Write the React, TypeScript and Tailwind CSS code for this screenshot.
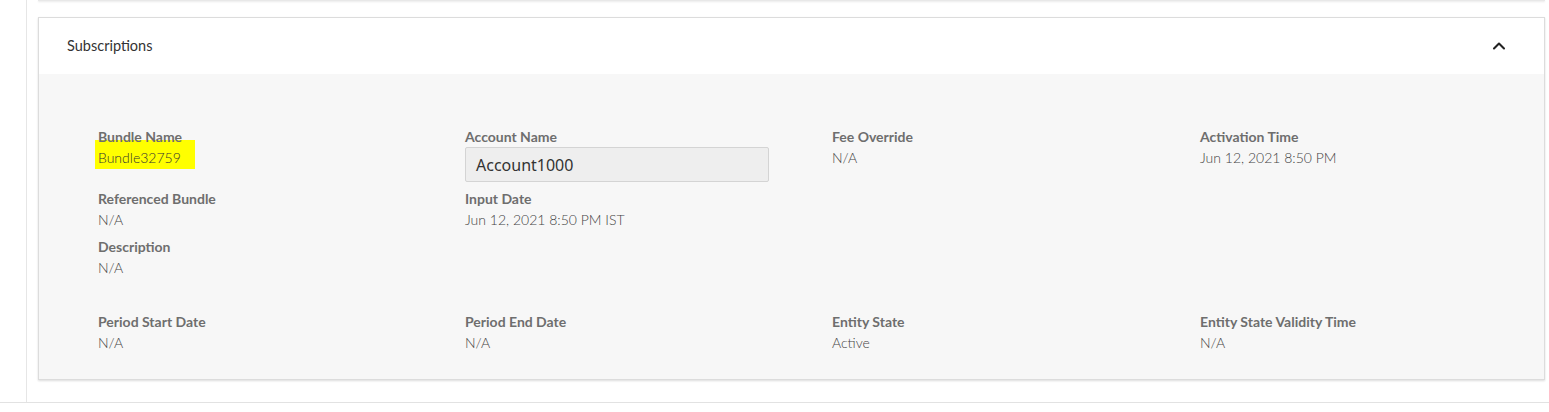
import { ChevronUp } from 'lucide-react';

type Field = { label: string; value?: string; input?: boolean; highlight?: boolean };

// rows of the top group, each cell sits in one of four columns
const topFields: (Field | null)[] = [
  { label: 'Bundle Name', value: 'Bundle32759', highlight: true },
  { label: 'Account Name', value: 'Account1000', input: true },
  { label: 'Fee Override', value: 'N/A' },
  { label: 'Activation Time', value: 'Jun 12, 2021 8:50 PM' },
  { label: 'Referenced Bundle', value: 'N/A' },
  { label: 'Input Date', value: 'Jun 12, 2021 8:50 PM IST' },
  null,
  null,
  { label: 'Description', value: 'N/A' },
];

const bottomFields: Field[] = [
  { label: 'Period Start Date', value: 'N/A' },
  { label: 'Period End Date', value: 'N/A' },
  { label: 'Entity State', value: 'Active' },
  { label: 'Entity State Validity Time', value: 'N/A' },
];

function FieldItem({ field }: { field: Field }) {
  return (
    <div className="flex flex-col">
      <span className="relative z-10 text-[14px] font-bold leading-[21px] text-[#6e6e6e]">{field.label}</span>
      {field.input ? (
        <div className="flex h-[35px] w-[304px] items-center rounded-[2px] border border-[#d4d4d4] bg-[#eeeeee] px-[10px] font-['Noto_Sans',sans-serif] text-[16px] text-[#333]">
          {field.value}
        </div>
      ) : field.highlight ? (
        <span className="-ml-[3px] -mt-[7px] flex h-[29px] w-[100px] items-end bg-[#ffff00] pb-[1px] pl-[3px] text-[14px] font-light leading-[21px] text-[#333]">
          {field.value}
        </span>
      ) : (
        <span className="text-[14px] font-light leading-[21px] text-[#444]">{field.value}</span>
      )}
    </div>
  );
}

export default function App() {
  return (
    <div className="h-[412px] w-[1549px] bg-white font-['Lato',sans-serif]">
      <div className="h-[403px] border-b border-[#e2e2e2]">
        <div className="ml-[26px] h-full border-l border-[#e6e6e6] pl-[11px]">
          <div className="h-[1px] w-[1507px] bg-[#e8e8e8] shadow-[0_1px_2px_rgba(0,0,0,0.12)]" />
          <div className="mt-[16px] w-[1507px] border border-[#dcdcdc] shadow-[0_1px_2px_rgba(0,0,0,0.14)]">
            <div className="flex h-[56px] items-center justify-between bg-white pl-[28px] pr-[35px]">
              <span className="text-[14.5px] text-[#333]">Subscriptions</span>
              <ChevronUp className="h-[20px] w-[20px] text-[#222]" strokeWidth={2.5} />
            </div>
            <div className="bg-[#f7f7f7] pb-[26px] pl-[59px] pt-[52px]">
              <div className="grid grid-cols-[367px_367px_368px_367px] gap-y-[6px]">
                {topFields.map((f, i) => (f ? <FieldItem key={f.label} field={f} /> : <div key={i} />))}
              </div>
              <div className="mt-[33px] grid grid-cols-[367px_367px_368px_367px]">
                {bottomFields.map((f) => (
                  <FieldItem key={f.label} field={f} />
                ))}
              </div>
            </div>
          </div>
        </div>
      </div>
    </div>
  );
}
